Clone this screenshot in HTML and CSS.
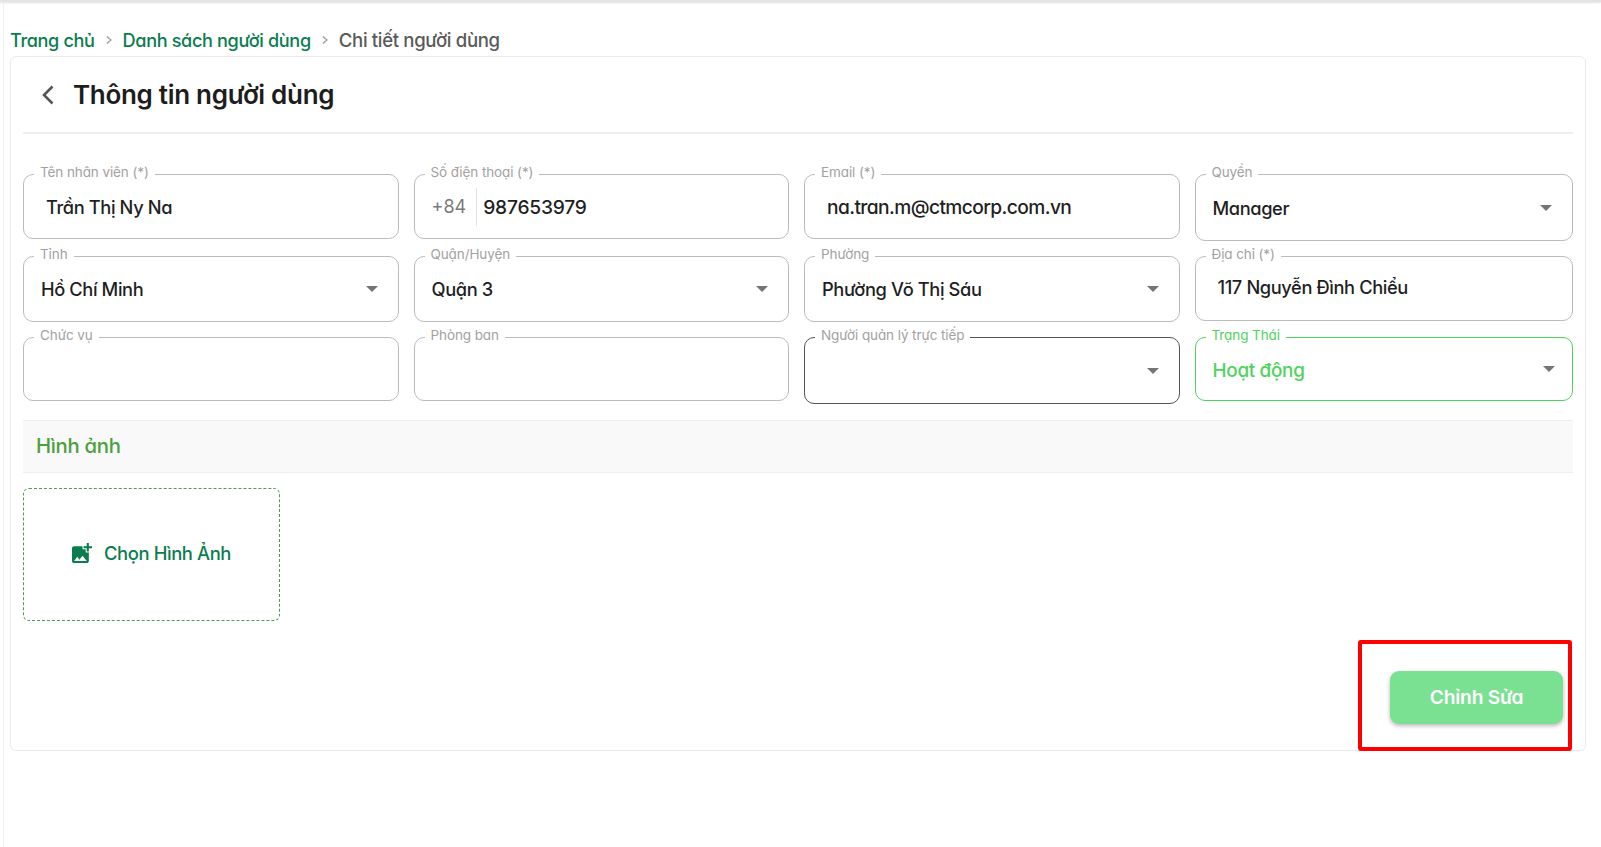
FILE: index.html
```html
<!DOCTYPE html>
<html lang="vi">
<head>
<meta charset="utf-8">
<title>Thông tin người dùng</title>
<link rel="stylesheet" href="styles.css">
</head>
<body>
<div class="topbar"></div>
<main class="shell">
  <nav class="crumbs">
    <a class="crumb">Trang chủ</a>
    <svg class="sep" viewBox="0 0 10 10"><path d="M3 1.5 7 5 3 8.5"/></svg>
    <a class="crumb">Danh sách người dùng</a>
    <svg class="sep" viewBox="0 0 10 10"><path d="M3 1.5 7 5 3 8.5"/></svg>
    <span class="crumb-current">Chi tiết người dùng</span>
  </nav>
  <section class="card">
    <header class="head">
      <svg class="back" viewBox="0 0 14 22"><path d="M11.5 2.5 3 11l8.5 8.5"/></svg>
      <h1 class="title">Thông tin người dùng</h1>
    </header>
    <div class="form">
      <div class="field"><span class="label">Tên nhân viên (*)</span><span class="value inset-name">Trần Thị Ny Na</span></div>
      <div class="field"><span class="label">Số điện thoại (*)</span><span class="dial">+84</span><span class="value wide">987653979</span></div>
      <div class="field"><span class="label">Email (*)</span><span class="value mail">na.tran.m@ctmcorp.com.vn</span></div>
      <div class="field tall-top"><span class="label">Quyền</span><span class="value">Manager</span><i class="caret"></i></div>

      <div class="field tall"><span class="label">Tỉnh</span><span class="value">Hồ Chí Minh</span><i class="caret"></i></div>
      <div class="field tall"><span class="label">Quận/Huyện</span><span class="value">Quận 3</span><i class="caret"></i></div>
      <div class="field tall"><span class="label">Phường</span><span class="value">Phường Võ Thị Sáu</span><i class="caret"></i></div>
      <div class="field"><span class="label">Địa chỉ (*)</span><span class="value inset-name raised">117 Nguyễn Đình Chiểu</span></div>

      <div class="field short"><span class="label">Chức vụ</span></div>
      <div class="field short"><span class="label">Phòng ban</span></div>
      <div class="field tall-top dark"><span class="label">Người quản lý trực tiếp</span><i class="caret"></i></div>
      <div class="field short active"><span class="label">Trạng Thái</span><span class="value lowered">Hoạt động</span><i class="caret"></i></div>
    </div>
    <h2 class="section">Hình ảnh</h2>
    <div class="drop">
      <svg class="drop-icon" viewBox="3 2 19 19"><path d="M19 7v2.99s-1.99.01-2 0V7h-3s.01-1.99 0-2h3V2h2v3h3v2h-3zm-3 4V8h-3V5H5c-1.1 0-2 .9-2 2v12c0 1.1.9 2 2 2h12c1.1 0 2-.9 2-2v-8h-3zM5 19l3-4 2 3 3-4 4 5H5z"/></svg>
      <span class="drop-text">Chọn Hình Ảnh</span>
    </div>
    <div class="actions"><button class="edit" type="button">Chỉnh Sửa</button></div>
    <div class="highlight"></div>
  </section>
</main>
</body>
</html>
```
FILE: styles.css
```css
* { box-sizing: border-box; }
html, body { margin: 0; height: 100%; background: #fff; }
body {
  font-family: Inter, "Noto Sans", sans-serif;
  font-feature-settings: "cv11" 1;
  color: #1f1f1f;
  overflow: hidden;
}
.topbar { height: 2px; background: #e4e4e4; box-shadow: 0 1px 2px rgba(0,0,0,.12); }
.shell {
  height: 845px;
  margin-left: 3px;
  border-left: 1px solid #efefef;
  padding: 0 15px 0 6px;
}
.crumbs {
  height: 54px;
  padding-top: 22px;
  display: flex;
  align-items: center;
  font-size: 18.1px;
  font-weight: 450;
  letter-spacing: -.35px;
  white-space: nowrap;
}
.crumb { color: #0a7d4f; }
.crumb-current { color: #5a5a5a; font-size: 18.6px; }
.sep { width: 10px; height: 10px; margin: 0 9px; fill: none; stroke: #9a9a9a; stroke-width: 1.2; }
.card {
  position: relative;
  height: 695px;
  border: 1px solid #ebebeb;
  border-radius: 6px;
  padding: 0 12px;
}
.head {
  height: 77px;
  border-bottom: 2px solid #eeeeee;
  display: flex;
  align-items: center;
  padding: 0 0 1px 18px;
}
.back { width: 14px; height: 22px; margin-top: 2px; fill: none; stroke: #555; stroke-width: 2.6; margin-right: 18px; }
.title { margin: 0; font-size: 26px; font-weight: 600; letter-spacing: -.3px; color: #1d1d1d; }
.form {
  margin-top: 40px;
  display: grid;
  grid-template-columns: repeat(3, 375.5px) 1fr;
  grid-template-rows: 66px 65px 66px;
  gap: 16px 15px;
  align-items: start;
}
.field {
  position: relative;
  height: 65px;
  border: 1px solid #bcbcbc;
  border-radius: 10px;
  display: flex;
  align-items: center;
  padding: 0 17px;
}
.short { height: 64px; }
.tall { height: 66px; }
.tall-top { height: 67px; }
.dark { border-color: #555; }
.active { border-color: #4fd35d; color: #4fd35d; }
.label {
  position: absolute;
  top: -11px;
  left: 10px;
  padding: 0 6px;
  background: #fff;
  font-size: 13.5px;
  line-height: 17px;
  letter-spacing: -.1px;
  color: #a2a2a2;
  white-space: nowrap;
}
.active .label { color: #4fd35d; }
.value { font-size: 18.3px; font-weight: 450; letter-spacing: -.4px; white-space: nowrap; }
.wide { font-size: 19.2px; letter-spacing: -.2px; }
.mail { font-size: 19.2px; letter-spacing: -.6px; margin-left: 5px; }
.active .value { color: #4fd35d; font-size: 18.9px; font-weight: 500; letter-spacing: -.3px; }
.inset-name { margin-left: 5px; }
.raised { margin-bottom: 3px; }
.lowered { margin-top: 2px; }
.dial {
  height: 38px;
  line-height: 38px;
  padding-right: 10px;
  margin-right: 6px;
  border-right: 1px solid #e4e4e4;
  font-size: 18px;
  color: #7a7a7a;
}
.caret {
  position: absolute;
  right: 20px;
  top: 50%;
  margin-top: -3px;
  border: 6px solid transparent;
  border-top: 6px solid #757575;
  border-bottom: 0;
}
.active .caret { right: 17px; }
.section {
  margin: 17px 0 15px;
  height: 53px;
  line-height: 50px;
  padding-left: 13px;
  background: #f9f9f9;
  border: solid #eeeeee;
  border-width: 1px 0;
  font-size: 20.3px;
  font-weight: 500;
  letter-spacing: -.3px;
  color: #4d9f40;
}
.drop {
  width: 257px;
  height: 133px;
  border: 1px dashed #4e9c55;
  border-radius: 6px;
  display: flex;
  align-items: center;
  justify-content: center;
  gap: 12px;
  padding-bottom: 3px;
}
.drop-icon { width: 20px; height: 20px; fill: #0a7d4f; }
.drop-text { font-size: 18.4px; font-weight: 450; letter-spacing: -.4px; color: #0a7d4f; }
.actions { margin-top: 50px; display: flex; justify-content: flex-end; padding-right: 10px; }
.edit {
  width: 173px;
  height: 53px;
  border: 0;
  border-radius: 9px;
  padding-bottom: 2px;
  background: #7be192;
  color: #fff;
  font: inherit;
  font-feature-settings: inherit;
  font-size: 19.2px;
  font-weight: 600;
  letter-spacing: -.2px;
  box-shadow: 0 2px 4px rgba(0,0,0,.28);
}
.highlight {
  position: absolute;
  right: 13px;
  bottom: -1px;
  width: 214px;
  height: 111px;
  border: 4px solid #ff0000;
  border-radius: 3px;
  pointer-events: none;
}
```
